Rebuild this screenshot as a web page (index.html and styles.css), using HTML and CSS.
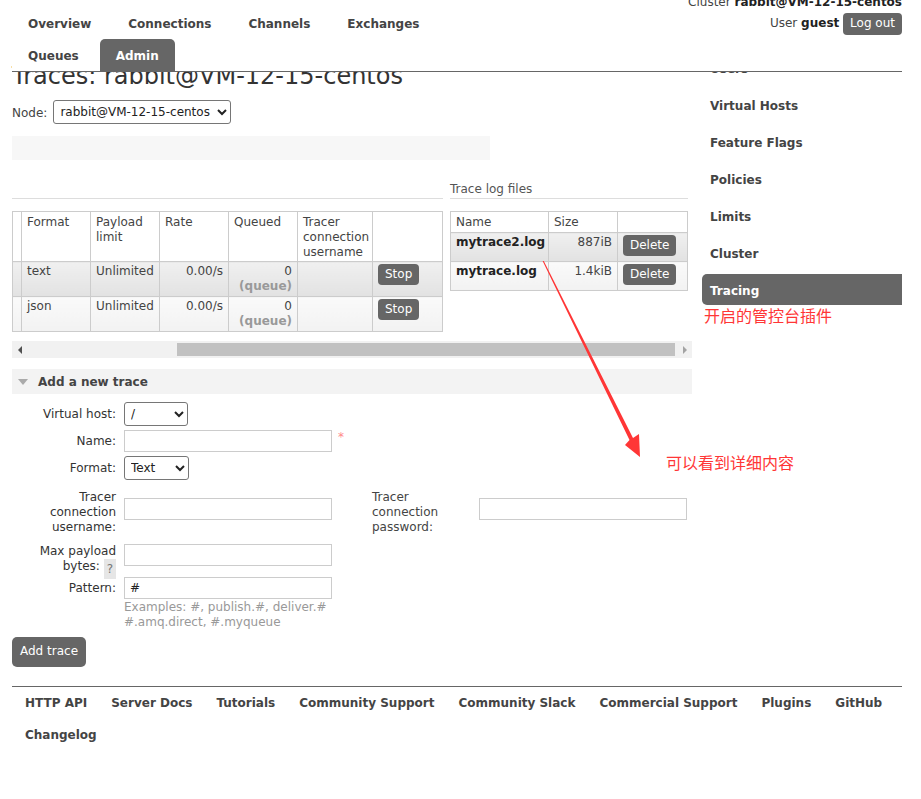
FILE: index.html
```html
<!DOCTYPE html>
<html lang="en">
<head>
<meta charset="utf-8">
<title>RabbitMQ Management - Traces</title>
<link rel="stylesheet" href="styles.css">
</head>
<body>
<div class="page">
  <header class="top">
    <ul class="nav">
      <li><a>Overview</a></li>
      <li><a>Connections</a></li>
      <li><a>Channels</a></li>
      <li><a>Exchanges</a></li>
      <li><a>Queues</a></li>
      <li class="active"><a>Admin</a></li>
    </ul>
    <div class="login">
      <div class="cluster">Cluster <b>rabbit@VM-12-15-centos</b></div>
      <div class="user">User <b>guest</b> <span class="btn">Log out</span></div>
    </div>
  </header>

  <div class="body">
    <main class="main">
      <h1>Traces: rabbit@VM-12-15-centos</h1>
      <div class="node">
        <span>Node:</span>
        <select class="sel node-sel"><option>rabbit@VM-12-15-centos</option></select>
      </div>
      <div class="updatebar"></div>

      <div class="cols">
        <section class="col-left">
          <h2>&nbsp;</h2>
          <table class="list traces">
            <colgroup>
              <col class="w9"><col class="w69"><col class="w69"><col class="w69"><col class="w69"><col class="w75"><col class="w70">
            </colgroup>
            <thead>
              <tr><th></th><th>Format</th><th>Payload limit</th><th>Rate</th><th>Queued</th><th>Tracer connection username</th><th></th></tr>
            </thead>
            <tbody>
              <tr class="alt1"><td></td><td>text</td><td>Unlimited</td><td class="r">0.00/s</td><td class="r">0<br><b class="q">(queue)</b></td><td></td><td><span class="btn">Stop</span></td></tr>
              <tr class="alt2"><td></td><td>json</td><td>Unlimited</td><td class="r">0.00/s</td><td class="r">0<br><b class="q">(queue)</b></td><td></td><td><span class="btn">Stop</span></td></tr>
            </tbody>
          </table>
        </section>
        <section class="col-right">
          <h2>Trace log files</h2>
          <table class="list files">
            <colgroup><col class="w98"><col class="w69"><col class="w70"></colgroup>
            <thead><tr><th>Name</th><th>Size</th><th></th></tr></thead>
            <tbody>
              <tr class="alt1"><td><b class="fname">mytrace2.log</b></td><td class="r">887iB</td><td><span class="btn">Delete</span></td></tr>
              <tr class="alt2"><td><b class="fname">mytrace.log</b></td><td class="r">1.4kiB</td><td><span class="btn">Delete</span></td></tr>
            </tbody>
          </table>
        </section>
      </div>

      <div class="hscroll">
        <span class="arr"><i class="tri-l"></i></span>
        <span class="spacer"></span>
        <span class="thumb"></span>
        <span class="arr"><i class="tri-r"></i></span>
      </div>

      <div class="section-h"><i class="tri-d"></i>Add a new trace</div>

      <form class="form">
        <div class="frow r1">
          <label>Virtual host:</label>
          <select class="sel vh-sel"><option>/</option></select>
        </div>
        <div class="frow r2">
          <label>Name:</label>
          <input class="inp" type="text">
          <span class="req">*</span>
        </div>
        <div class="frow r3">
          <label>Format:</label>
          <select class="sel fmt-sel"><option>Text</option></select>
        </div>
        <div class="frow r4">
          <label>Tracer<br>connection<br>username:</label>
          <input class="inp" type="text">
          <span></span>
          <label class="left">Tracer<br>connection<br>password:</label>
          <input class="inp" type="password">
        </div>
        <div class="frow r5">
          <label>Max payload<br>bytes: <span class="help">?</span></label>
          <input class="inp" type="text">
        </div>
        <div class="frow r6">
          <label>Pattern:</label>
          <div>
            <input class="inp" type="text" value="#">
            <div class="hint">Examples: #, publish.#, deliver.#<br>#.amq.direct, #.myqueue</div>
          </div>
        </div>
      </form>
      <span class="btn big">Add trace</span>
    </main>

    <aside class="side">
      <ul>
        <li>Users</li>
        <li>Virtual Hosts</li>
        <li>Feature Flags</li>
        <li>Policies</li>
        <li>Limits</li>
        <li>Cluster</li>
        <li class="active">Tracing</li>
      </ul>
      <div class="note">开启的管控台插件</div>
    </aside>
  </div>

  <footer class="foot">
    <a>HTTP API</a><a>Server Docs</a><a>Tutorials</a><a>Community Support</a><a>Community Slack</a><a>Commercial Support</a><a>Plugins</a><a>GitHub</a><a>Changelog</a>
  </footer>
</div>

<div class="annot">
  <svg class="arrow" width="921" height="799" viewBox="0 0 921 799">
    <polygon points="542.6,261 543.8,261 633,438 639,434 640,457 625,445 629.5,440" fill="#ff3636"/>
  </svg>
  <div class="note2">可以看到详细内容</div>
</div>
</body>
</html>
```

FILE: styles.css
```css
* { box-sizing: border-box; }
body {
  margin: 0;
  font-family: "DejaVu Sans", Verdana, sans-serif;
  font-size: 12px;
  color: #444;
  background: #fff;
}
.page {
  width: 890px;
  margin-left: 12px;
}

/* header */
.top {
  position: relative;
  z-index: 2;
  background: #fff;
  display: flex;
  justify-content: space-between;
  align-items: flex-start;
  border-bottom: 1px solid #666;
  height: 72px;
}
.nav {
  list-style: none;
  margin: 7px 0 0;
  padding: 0;
  display: flex;
  flex-wrap: wrap;
  max-width: 460px;
}
.nav li { margin-right: 5px; }
.nav a {
  display: block;
  padding: 2px 16px 0;
  line-height: 30px;
  height: 32px;
  font-weight: bold;
  color: #444;
}
.nav li.active a {
  background: #666;
  color: #fff;
  border-radius: 5px 5px 0 0;
}
.login {
  margin-top: -5px;
  text-align: right;
  line-height: 15px;
  color: #444;
}
.login b { color: #222; }
.cluster { height: 15px; }
.user { margin-top: 3px; }
.user .btn { padding: 3px 7px 4px; }

.btn {
  display: inline-block;
  background: #666;
  color: #fff;
  border-radius: 4px;
  padding: 3px 7px;
  line-height: 15px;
  font-size: 12px;
}
.btn.big {
  padding: 7px 8px 8px;
  margin-top: 7px;
  border-radius: 5px;
}

/* body */
.body {
  display: flex;
  gap: 10px;
  margin-top: -20px;
}
.main { width: 680px; }
.side { width: 200px; }

h1 {
  margin: 6px 0 0;
  font-size: 24px;
  font-weight: normal;
  line-height: 36px;
  color: #333;
}
.node {
  margin-top: 6px;
  display: flex;
  align-items: center;
  gap: 6px;
  height: 24px;
}
.node span { padding-top: 2px; }
.sel {
  font-family: "DejaVu Sans", Verdana, sans-serif;
  font-size: 12px;
  height: 24px;
  border: 1px solid #767676;
  border-radius: 3px;
  background: #fff;
  color: #222;
  padding: 0 2px;
}
.node-sel { width: 178px; }
.vh-sel { width: 64px; }
.fmt-sel { width: 65px; }

.updatebar {
  margin-top: 12px;
  width: 478px;
  height: 24px;
  background: #f7f7f7;
}

.cols {
  display: flex;
  gap: 7px;
  margin-top: 21px;
}
.col-left { width: 431px; }
.col-right { width: 238px; }
h2 {
  margin: 0;
  font-size: 12px;
  font-weight: normal;
  line-height: 15px;
  padding: 1px 0 1px;
  border-bottom: 1px solid #ddd;
  color: #555;
}

.list {
  margin-top: 12px;
  border-collapse: collapse;
  table-layout: fixed;
  line-height: 15px;
}
.traces { width: 431px; }
.files { width: 238px; }
.w9 { width: 9px; }
.w69 { width: 69px; }
.w70 { width: 70px; }
.w75 { width: 75px; }
.w98 { width: 98px; }
.list th, .list td {
  border: 1px solid #ccc;
  padding: 2px 5px;
  text-align: left;
  vertical-align: top;
  font-weight: normal;
  color: #444;
}
.list th { background: #fff; padding: 3px 5px 1px; }
.list td.r { text-align: right; }
.list tr.alt1 td { background: linear-gradient(#f0f0f0, #e2e2e2); }
.list tr.alt2 td { background: linear-gradient(#fafafa, #f2f2f2); }
.q { color: #999; }
.fname { color: #222; }
.files th { padding-bottom: 2px; }
.files td { padding-bottom: 5px; }

.hscroll {
  margin-top: 9px;
  height: 17px;
  background: #f1f1f1;
  display: flex;
  align-items: center;
}
.arr {
  width: 15px;
  height: 17px;
  display: flex;
  align-items: center;
  justify-content: center;
}
.spacer { width: 150px; }
.thumb {
  width: 498px;
  height: 13px;
  background: #c1c1c1;
}
.hscroll .arr:last-child { margin-left: 2px; }
.tri-l {
  width: 0; height: 0;
  border-top: 4px solid transparent;
  border-bottom: 4px solid transparent;
  border-right: 4px solid #505050;
}
.tri-r {
  width: 0; height: 0;
  border-top: 4px solid transparent;
  border-bottom: 4px solid transparent;
  border-left: 4px solid #a3a3a3;
}

.section-h {
  margin-top: 11px;
  height: 25px;
  background: #f3f3f3;
  display: flex;
  align-items: center;
  font-weight: bold;
  color: #444;
}
.tri-d {
  width: 0; height: 0;
  border-left: 5px solid transparent;
  border-right: 5px solid transparent;
  border-top: 6px solid #aaa;
  margin: 0 10px 0 6px;
}

/* form */
.form { margin: 0; }
.frow {
  display: grid;
  grid-template-columns: 104px 208px 24px 99px 208px;
  column-gap: 8px;
  align-items: center;
}
.frow label {
  text-align: right;
  line-height: 15px;
  color: #333;
}
.frow label.left { text-align: left; color: #444; }
.r1 { margin-top: 8px; }
.r2 { margin-top: 4px; }
.r3 { margin-top: 4px; }
.r4 { margin-top: 10px; align-items: start; }
.r4 .inp { margin-top: 8px; }
.r5 { margin-top: 9px; align-items: start; }
.r6 { margin-top: -2px; align-items: start; }
.r6 label { margin-top: 4px; }
.inp {
  display: block;
  width: 208px;
  height: 22px;
  border: 1px solid #ccc;
  background: #fff;
  font-family: "DejaVu Sans", Verdana, sans-serif;
  font-size: 12px;
  color: #222;
  padding: 0 5px;
  margin: 0;
}
.req {
  color: #f88;
  margin-left: -2px;
  align-self: start;
  line-height: 15px;
}
.help {
  display: inline-block;
  background: #e6e6e6;
  color: #777;
  padding: 3px 3px 2px;
  line-height: 15px;
  vertical-align: -3px;
}
.hint {
  margin-top: 1px;
  color: #999;
  line-height: 15px;
  white-space: nowrap;
}

/* sidebar */
.side ul {
  list-style: none;
  margin: 0;
  padding: 0;
}
.side li {
  height: 31px;
  line-height: 28px;
  padding: 3px 0 0 8px;
  font-weight: bold;
  color: #444;
}
.side li + li { margin-top: 6px; }
.side li.active {
  background: #666;
  color: #fff;
  border-radius: 5px 0 0 5px;
}
.note {
  padding-left: 2px;
  font-family: "Noto Sans CJK SC", sans-serif;
  font-size: 16px;
  line-height: 20px;
  color: #ff3636;
}

/* footer */
.foot {
  margin-top: 19px;
  border-top: 1px solid #666;
  padding-left: 1px;
  display: flex;
  flex-wrap: wrap;
}
.foot a {
  padding: 0 12px;
  line-height: 32px;
  font-weight: bold;
  color: #444;
}

/* annotation overlay */
.annot {
  position: absolute;
  left: 0;
  top: 0;
  width: 921px;
  height: 799px;
  pointer-events: none;
  z-index: 5;
}
.arrow { display: block; }
.note2 {
  position: absolute;
  left: 666px;
  top: 452px;
  font-family: "Noto Sans CJK SC", sans-serif;
  font-size: 16px;
  line-height: 20px;
  color: #ff3636;
}
```
